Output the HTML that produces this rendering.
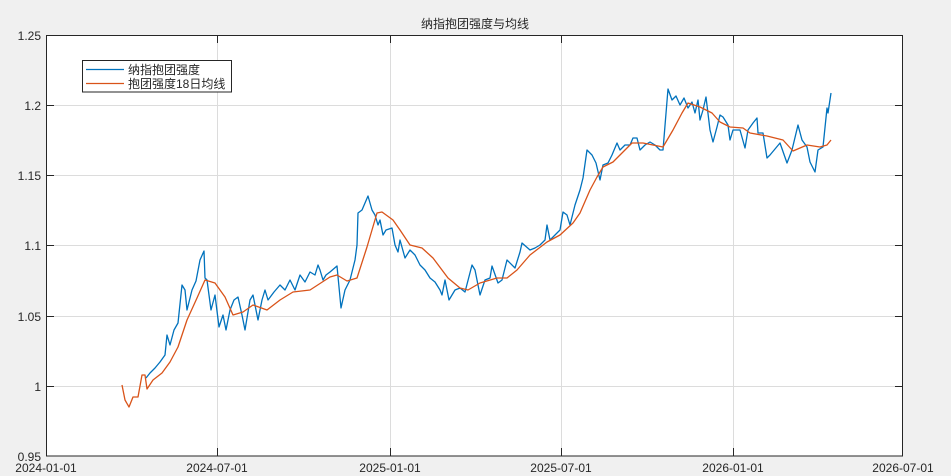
<!DOCTYPE html>
<html><head><meta charset="utf-8"><style>
html,body{margin:0;padding:0;background:#f0f0f0;}
svg{display:block;font-family:"Liberation Sans","Noto Sans CJK SC",sans-serif;}
</style></head><body>
<svg width="951" height="476" viewBox="0 0 951 476">
<rect x="0" y="0" width="951" height="476" fill="#f0f0f0"/>
<rect x="46.5" y="35.5" width="856" height="420.5" fill="#fff"/>
<g stroke="#dcdcdc" stroke-width="1">
<line x1="46.5" y1="105.5" x2="902.5" y2="105.5"/>
<line x1="46.5" y1="175.5" x2="902.5" y2="175.5"/>
<line x1="46.5" y1="245.5" x2="902.5" y2="245.5"/>
<line x1="46.5" y1="316.5" x2="902.5" y2="316.5"/>
<line x1="46.5" y1="386.5" x2="902.5" y2="386.5"/>
<line x1="217.5" y1="35.5" x2="217.5" y2="456"/>
<line x1="390.5" y1="35.5" x2="390.5" y2="456"/>
<line x1="561.5" y1="35.5" x2="561.5" y2="456"/>
<line x1="733.5" y1="35.5" x2="733.5" y2="456"/>
</g>
<polyline fill="none" stroke="#0072bd" stroke-width="1.3" stroke-linejoin="round" points="146,378 150,373 155,368 160,362 165,355 167,335 170,345 174,330 178,323 182,285 185,290 187,310 192,290 196,281 200,260 204,251 205,278 207,280 211,310 215,295 219,327 223,315 226,330 230,310 234,300 238,297 242,315 245,330 250,300 253,295 258,320 262,300 265,290 268,300 274,292 280,285 285,290 290,280 295,290 300,275 305,282 310,272 315,275 318,265 320,270 323,280 326,275 330,272 337,266 341,308 345,290 350,280 355,260 357,245 358,213 362,210 368,196 372,210 375,215 378,225 380,220 383,235 386,230 392,228 395,245 398,252 400,240 405,258 410,250 415,255 420,265 425,270 430,278 435,282 440,290 442,295 445,280 448,295 449,300 455,290 460,288 465,292 472,265 475,270 480,295 485,280 490,278 492,266 498,283 502,280 507,260 515,268 520,252 522,243 530,250 535,248 540,245 545,240 547,225 550,240 555,235 560,230 563,212 567,215 570,225 575,205 580,190 583,178 587,150 592,155 596,163 600,180 603,165 608,163 612,155 617,143 620,150 625,145 630,145 633,138 637,138 640,150 645,145 650,142 655,145 660,150 663,150 668,89 672,100 676,96 680,105 684,98 688,108 692,102 695,113 698,100 700,120 703,110 706,97 710,130 713,142 717,127 720,115 723,117 728,125 730,140 733,130 740,130 745,148 748,130 753,123 757,118 758,133 763,133 767,158 770,155 780,143 787,163 792,150 798,125 802,140 807,147 810,162 815,172 818,150 823,147 827,108 828,113 831,93"/>
<polyline fill="none" stroke="#d95319" stroke-width="1.3" stroke-linejoin="round" points="122,385 125,400 129,407 133,397 138,397 142,375 145,375 147,389 153,380 162,373 170,362 178,347 187,320 197,298 205,280 215,283 225,297 233,315 243,312 253,305 267,310 280,300 293,292 310,290 330,277 337,275 347,281 357,278 367,247 377,213 382,212 393,220 400,230 410,245 422,248 433,258 448,278 460,288 468,290 480,283 497,278 507,278 517,270 530,255 547,242 560,235 573,223 580,213 590,190 597,177 603,167 613,162 623,152 632,143 643,143 663,147 673,130 682,113 688,103 700,107 712,113 720,122 730,127 743,128 750,133 767,136 783,140 793,151 807,145 820,147 827,145 831,140"/>
<rect x="46.5" y="35.5" width="856" height="420.5" fill="none" stroke="#262626" stroke-width="1"/>
<g stroke="#262626" stroke-width="1">
<line x1="46.5" y1="105.5" x2="54" y2="105.5"/><line x1="46.5" y1="175.5" x2="54" y2="175.5"/>
<line x1="46.5" y1="245.5" x2="54" y2="245.5"/><line x1="46.5" y1="316.5" x2="54" y2="316.5"/>
<line x1="46.5" y1="386.5" x2="54" y2="386.5"/>
<line x1="902.5" y1="105.5" x2="895" y2="105.5"/><line x1="902.5" y1="175.5" x2="895" y2="175.5"/>
<line x1="902.5" y1="245.5" x2="895" y2="245.5"/><line x1="902.5" y1="316.5" x2="895" y2="316.5"/>
<line x1="902.5" y1="386.5" x2="895" y2="386.5"/>
<line x1="217.5" y1="456" x2="217.5" y2="448"/><line x1="390.5" y1="456" x2="390.5" y2="448"/>
<line x1="561.5" y1="456" x2="561.5" y2="448"/><line x1="733.5" y1="456" x2="733.5" y2="448"/>
<line x1="217.5" y1="35.5" x2="217.5" y2="43"/><line x1="390.5" y1="35.5" x2="390.5" y2="43"/>
<line x1="561.5" y1="35.5" x2="561.5" y2="43"/><line x1="733.5" y1="35.5" x2="733.5" y2="43"/>
</g>
<g fill="#262626" font-size="12" text-anchor="end">
<text x="41" y="40">1.25</text><text x="41" y="110">1.2</text><text x="41" y="180">1.15</text>
<text x="41" y="250">1.1</text><text x="41" y="321">1.05</text><text x="41" y="391">1</text>
<text x="41" y="461">0.95</text>
</g>
<g fill="#262626" font-size="12" text-anchor="middle">
<text x="46" y="472">2024-01-01</text><text x="217" y="472">2024-07-01</text>
<text x="390" y="472">2025-01-01</text><text x="561" y="472">2025-07-01</text>
<text x="733" y="472">2026-01-01</text><text x="903" y="472">2026-07-01</text>
<text x="475" y="28" font-size="12">纳指抱团强度与均线</text>
</g>
<rect x="82.5" y="60.5" width="149" height="31.5" fill="#fff" stroke="#262626" stroke-width="1"/>
<line x1="86" y1="69.5" x2="124" y2="69.5" stroke="#0072bd" stroke-width="1.3"/>
<line x1="86" y1="83.5" x2="124" y2="83.5" stroke="#d95319" stroke-width="1.3"/>
<g fill="#262626" font-size="12">
<text x="128" y="74">纳指抱团强度</text>
<text x="128" y="88">抱团强度18日均线</text>
</g>
</svg>
</body></html>
